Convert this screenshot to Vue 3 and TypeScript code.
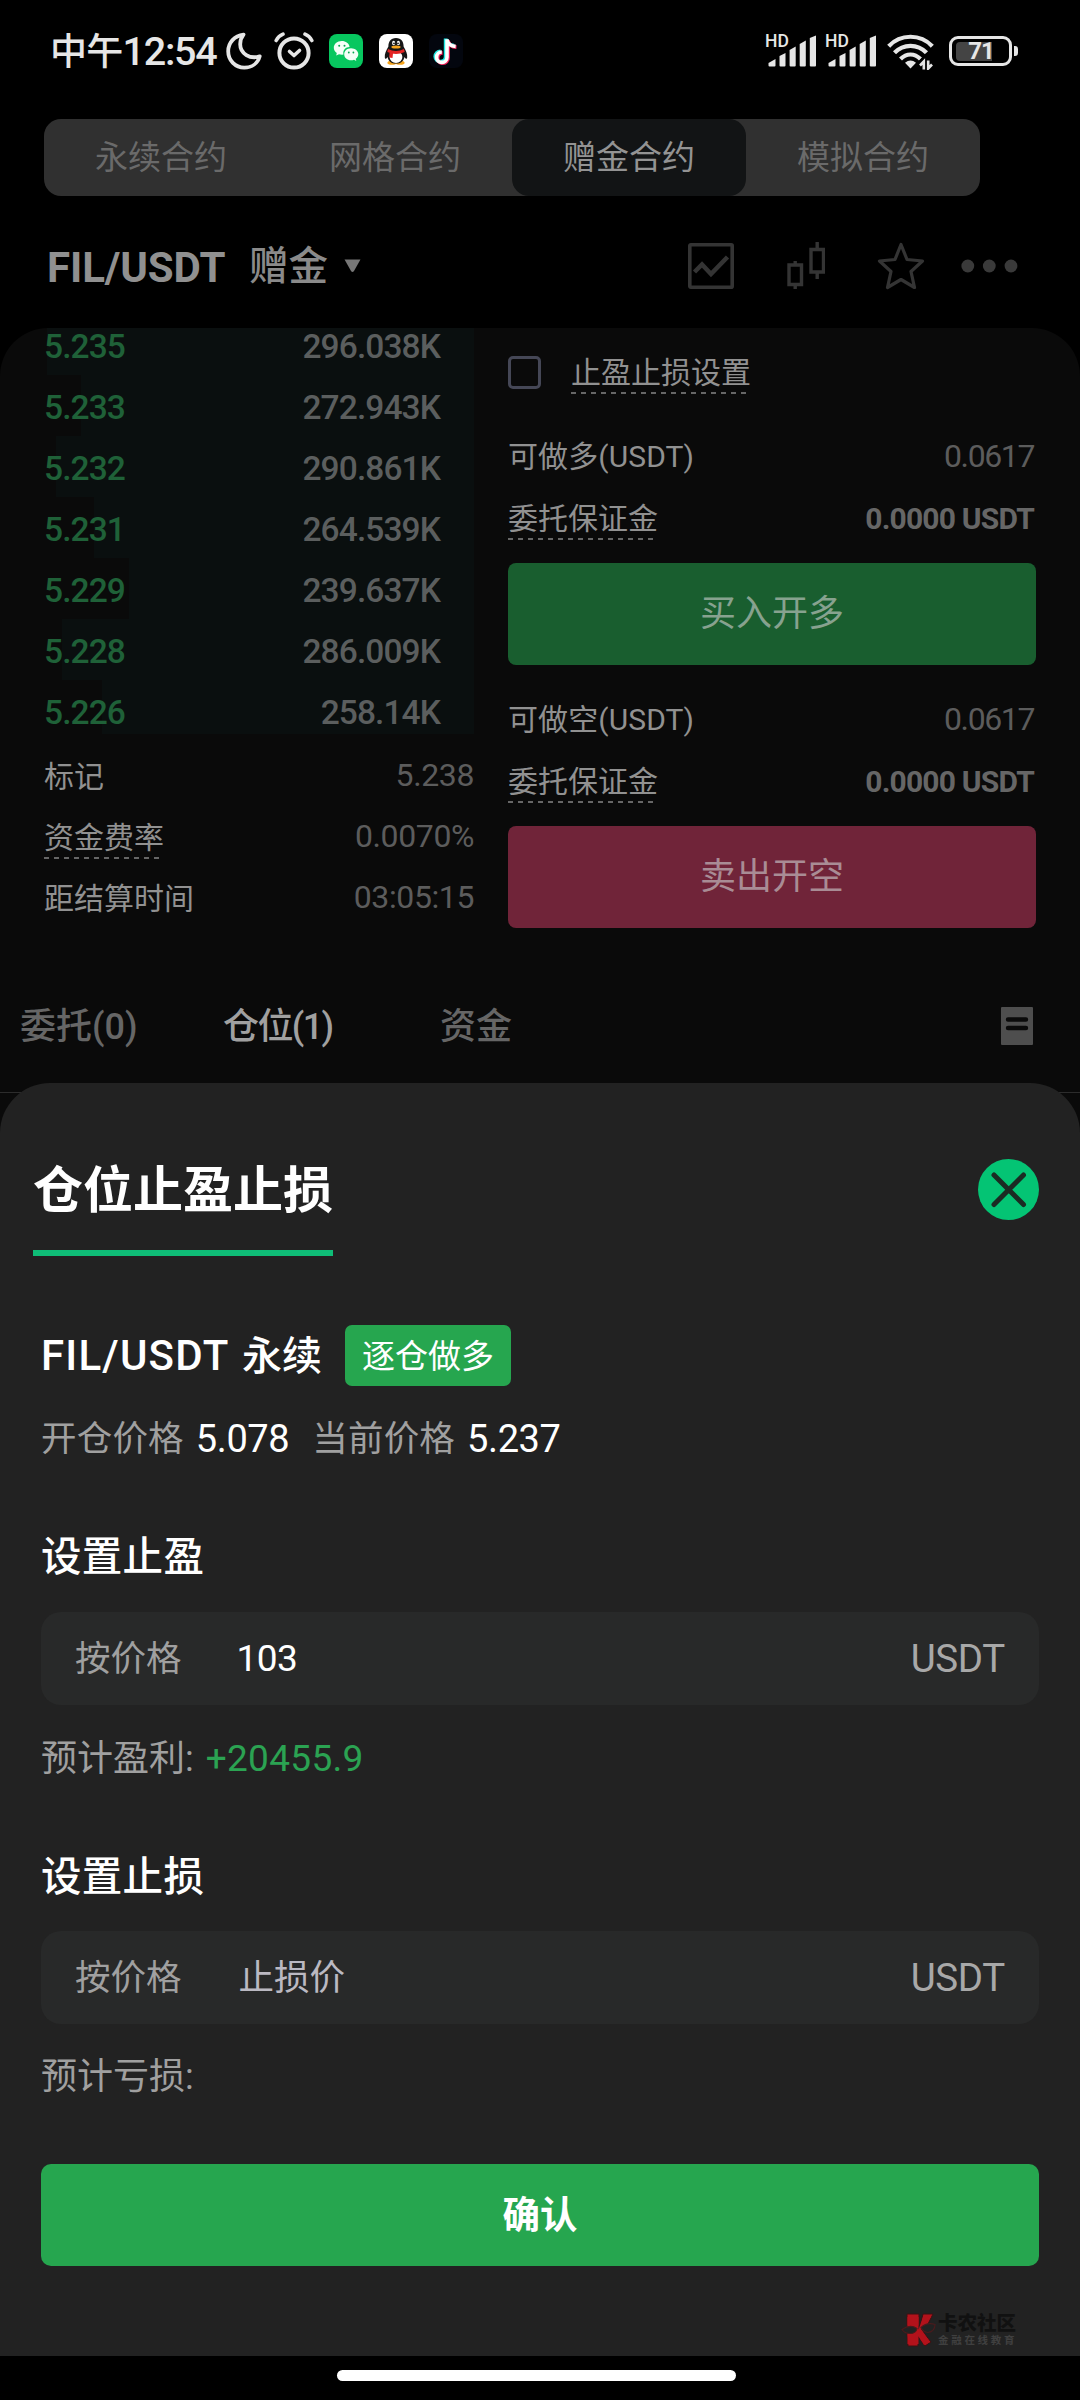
<script setup lang="ts">
interface Level {
  price: string
  amount: string
  bar: number
}

const segments: string[] = ['永续合约', '网格合约', '赠金合约', '模拟合约']
const activeSegment = 2

// bar: width in px of the depth bar, measured from the right edge of the book
const levels: Level[] = [
  { price: '5.235', amount: '296.038K', bar: 427 },
  { price: '5.233', amount: '272.943K', bar: 393 },
  { price: '5.232', amount: '290.861K', bar: 418 },
  { price: '5.231', amount: '264.539K', bar: 380 },
  { price: '5.229', amount: '239.637K', bar: 345 },
  { price: '5.228', amount: '286.009K', bar: 412 },
  { price: '5.226', amount: '258.14K', bar: 372 },
]

const info = [
  { label: '标记', value: '5.238', dashed: false },
  { label: '资金费率', value: '0.0070%', dashed: true },
  { label: '距结算时间', value: '03:05:15', dashed: false },
]

const orders = [
  { label: '可做多(USDT)', button: '买入开多', kind: 'buy' },
  { label: '可做空(USDT)', button: '卖出开空', kind: 'sell' },
]
</script>

<template>
  <div class="screen">
    <header class="status">
      <span class="clock"><span class="noon">中午</span>12:54</span>
      <svg class="moon" width="36" height="38" viewBox="0 0 36 38">
        <path d="M17.5 2.6C8.500 3.800 2.200 10.500 2.200 19.300C2.200 28.500 9.300 35.600 18.300 35.600C25.800 35.600 31.800 31.300 33.700 24.300C24 27.500 14.200 21.700 14.200 12.300C14.200 8.500 15.500 5.100 17.500 2.600Z" fill="none" stroke="#e6e6e6" stroke-width="3.800" stroke-linejoin="round" />
      </svg>
      <svg class="alarm" width="40" height="38" viewBox="0 0 40 38" fill="none" stroke="#e6e6e6" stroke-width="4" stroke-linecap="round" stroke-linejoin="round">
        <circle cx="20" cy="21" r="14.600" />
        <path d="M15.500 19.500L20 23.500L25.500 18.500" stroke-width="3.600" />
        <path d="M2.200 8.500Q4.500 4 9 2.200M31 2.200Q35.500 4 37.800 8.500" stroke-width="3.600" />
      </svg>
      <svg class="wechat" width="34" height="34" viewBox="0 0 34 34">
        <rect width="34" height="34" rx="8" fill="#07c75f" />
        <path d="M12.800 7C8 7 4.800 10 4.800 13.800C4.800 16 6 17.800 7.800 19L7.200 21.600L10 20.200Q12 20.900 14.500 20.600C13.500 15.500 17.500 12.800 20.600 13C20.200 9.500 16.800 7 12.800 7Z" fill="#f4fff8" />
        <path d="M22 14.200C17.800 14.200 15.200 17 15.200 20.200C15.200 23.700 18.200 26.200 22 26.200Q23.600 26.200 25 25.700L27.300 26.900L26.700 24.800C28.300 23.700 29.300 22 29.300 20.200C29.300 17 26.300 14.200 22 14.200Z" fill="#f4fff8" />
        <g fill="#07a851"><circle cx="10.200" cy="11.700" r="1" /><circle cx="15.500" cy="11.700" r="1" /><circle cx="19.800" cy="18.500" r=".9" /><circle cx="24.400" cy="18.500" r=".9" /></g>
      </svg>
      <svg class="qq" width="34" height="34" viewBox="0 0 34 34">
        <rect width="34" height="34" rx="8" fill="#fff" />
        <ellipse cx="13" cy="28.800" rx="4.600" ry="2" fill="#f6a41c" /><ellipse cx="21" cy="28.800" rx="4.600" ry="2" fill="#f6a41c" />
        <path d="M17 4C11.500 4 9.400 8 9.400 12.500C7 17 5.500 19.500 5.800 23.500C6.200 26 7.600 24.500 8.500 23C9.500 27.500 12.500 29.600 17 29.600S24.500 27.500 25.500 23C26.400 24.500 27.800 26 28.200 23.500C28.500 19.500 27 17 24.600 12.500C24.600 8 22.500 4 17 4Z" fill="#161616" />
        <ellipse cx="17" cy="23" rx="6.400" ry="6" fill="#fff" />
        <path d="M9 15Q17 19 25 15L25.700 18Q17 22 8.300 18ZM10.500 18L14 19.500L13.500 24L10.300 23.400Z" fill="#e32424" />
        <ellipse cx="14.600" cy="9" rx="1.500" ry="2.200" fill="#fff" /><ellipse cx="19.400" cy="9" rx="1.500" ry="2.200" fill="#fff" />
        <circle cx="15" cy="9.400" r=".8" /><circle cx="19" cy="9.400" r=".8" />
        <ellipse cx="17" cy="13" rx="4.600" ry="1.500" fill="#f6a41c" />
      </svg>
      <svg class="tiktok" width="34" height="34" viewBox="0 0 34 34" fill="none" stroke-width="3.800">
        <rect width="34" height="34" rx="8" fill="#03060e" />
        <path d="M16.700 4.500V22.500A5.200 5.200 0 1 1 11.500 17.300M16.900 5.500Q18.200 11 25 11.600" stroke="#25e8e4" />
        <path d="M19 6V23.800A5.200 5.200 0 1 1 13.600 18.800M19 7Q20.500 12.700 27.500 13.200" stroke="#f5205a" />
        <path d="M18 5.200V23.200A5.200 5.200 0 1 1 12.800 18M18.100 6.200Q19.600 11.900 26.600 12.400" stroke="#fff" stroke-width="3.600" />
      </svg>
      <div class="status-right">
        <div v-for="n in 2" :key="n" class="signal">
          <span class="hd">HD</span>
          <svg width="49" height="34" viewBox="2 0 49 34">
            <g fill="#e6e6e6">
              <path d="M2.500 29L9.500 25V31.500Q9.500 32.500 8.500 32.500H3.500Q2.500 32.500 2.500 31.500Z" />
              <path d="M13.500 22L19.500 19V31.500Q19.500 32.500 18.500 32.500H14.500Q13.500 32.500 13.500 31.500Z" />
              <path d="M23.600 16L29.700 12.500V31.500Q29.700 32.500 28.700 32.500H24.600Q23.600 32.500 23.600 31.500Z" />
              <path d="M33.700 10L39.800 6.500V31.500Q39.800 32.500 38.800 32.500H34.700Q33.700 32.500 33.700 31.500Z" />
              <path d="M43.800 4L50 1.500V31.500Q50 32.500 49 32.500H44.800Q43.800 32.500 43.800 31.500Z" />
            </g>
          </svg>
        </div>
        <svg class="wifi" width="47" height="36" viewBox="0 0 47 36">
          <g fill="none" stroke="#e6e6e6" stroke-width="4.200">
            <path d="M1.700 12.200C13.500 -.4 33.500 -.4 45.300 12.200" />
            <path d="M7.500 18.800C16.500 9.500 30.500 9.500 39.500 18.800" />
            <path d="M13.500 25C19.500 19 27.500 19 33.500 25" />
          </g>
          <path d="M18 28.700Q23.500 24.500 29 28.700L23.500 34.500Z" fill="#e6e6e6" />
          <path d="M36.500 36V26.500L32.800 30.500M41 26V35.500L45 31.500" fill="none" stroke="#000" stroke-width="6" />
          <path d="M36.800 35.500V27.500L33 31.500M41.200 26.500V34.500L45 30.500" fill="none" stroke="#e6e6e6" stroke-width="2.600" />
        </svg>
        <div class="battery"><div class="charge"></div><span class="pct">71</span></div>
        <div class="nub"></div>
      </div>
    </header>

    <nav class="segments">
      <div v-for="(s, i) in segments" :key="s" class="segment" :class="{ on: i === activeSegment }">{{ s }}</div>
    </nav>

    <div class="pair">
      <span class="symbol">FIL/USDT</span>
      <span class="gift">赠金</span>
      <svg class="caret" width="17" height="14" viewBox="0 0 17 14"><path d="M.5 .5H16.500L10 12Q8.500 14 7 12Z" fill="#777" /></svg>
      <div class="tools">
        <svg width="46" height="46" viewBox="0 0 46 46" fill="none" stroke="#343434" stroke-width="3.600">
          <rect x="1.800" y="1.800" width="42.400" height="42.400" rx="1" />
          <path d="M6.500 29L14 21.500L23 31L39.500 14" stroke-width="4.500" />
        </svg>
        <svg class="candles" width="38" height="48" viewBox="0 0 38 48" fill="none" stroke="#343434" stroke-width="3.400">
          <path d="M2 23H14.500V42.500H2ZM8.200 19V23M8.200 42.500V47M24 7.500H36.500V30H24ZM30.200 0V7.500M30.200 30V37" />
        </svg>
        <svg class="star" width="48" height="48" viewBox="0 0 48 48" fill="none" stroke="#343434" stroke-width="3.200" stroke-linejoin="round">
          <path d="M24 2.500L30 17.500L45.500 19L34 29.500L37.500 45.500L24 37.500L10.500 45.500L14 29.500L2.500 19L18 17.500Z" />
        </svg>
        <svg class="dots" width="57" height="14" viewBox="0 0 57 14" fill="#3a3a3a">
          <circle cx="6.800" cy="7" r="6.400" /><circle cx="28.300" cy="7" r="6.400" /><circle cx="50" cy="7" r="6.400" />
        </svg>
      </div>
    </div>

    <main class="panel">
      <div class="columns">
        <section class="left">
          <div class="book">
            <div v-for="l in levels" :key="l.price" class="level">
              <div class="depth" :style="{ width: l.bar + 'px' }"></div>
              <span class="price">{{ l.price }}</span>
              <span class="amount">{{ l.amount }}</span>
            </div>
          </div>
          <div v-for="row in info" :key="row.label" class="info-row">
            <span class="info-label" :class="{ dashed: row.dashed }">{{ row.label }}</span>
            <span class="info-value">{{ row.value }}</span>
          </div>
        </section>

        <section class="right">
          <div class="tpsl">
            <span class="checkbox"></span>
            <span class="dashed">止盈止损设置</span>
          </div>
          <div v-for="o in orders" :key="o.kind" class="order">
            <div class="avail"><span>{{ o.label }}</span><span class="avail-value">0.0617</span></div>
            <div class="margin"><span class="dashed">委托保证金</span><span class="margin-value">0.0000 USDT</span></div>
            <button class="trade" :class="o.kind">{{ o.button }}</button>
          </div>
        </section>
      </div>

      <div class="tabs">
        <span class="tab first">委托(0)</span>
        <span class="tab second">仓位(1)</span>
        <span class="tab third">资金</span>
        <svg class="list" width="32" height="38" viewBox="0 0 32 38">
          <rect width="32" height="38" rx="1" fill="#4e4e4e" />
          <path d="M7 12.500H25M7 21H25" stroke="#0a0a0a" stroke-width="4.400" stroke-linecap="round" />
        </svg>
      </div>
    </main>

    <section class="sheet">
      <div class="sheet-head">
        <h2>仓位止盈止损</h2>
        <svg class="close" width="61" height="61" viewBox="0 0 61 61">
          <circle cx="30.500" cy="30.500" r="30.500" fill="#04c474" />
          <path d="M16 16L45.500 45.500M45.500 16L16 45.500" stroke="#1b2b23" stroke-width="5" stroke-linecap="round" />
        </svg>
      </div>
      <div class="position">
        <span class="pos-symbol">FIL/USDT</span>
        <span class="pos-name">永续</span>
        <span class="badge">逐仓做多</span>
      </div>
      <div class="prices">
        <span>开仓价格</span><b class="open">5.078</b>
        <span class="now-label">当前价格</span><b>5.237</b>
      </div>

      <h3>设置止盈</h3>
      <div class="field"><span>按价格</span><span class="entry">103</span><span class="unit">USDT</span></div>
      <div class="estimate">预计盈利:<span class="gain">+20455.9</span></div>

      <h3>设置止损</h3>
      <div class="field"><span>按价格</span><span class="entry hint">止损价</span><span class="unit">USDT</span></div>
      <div class="estimate">预计亏损:</div>

      <button class="confirm">确认</button>

      <div class="watermark">
        <svg width="36" height="36" viewBox="0 0 36 36">
          <path d="M6 2H18V14H6ZM6 22L17 17V34H7ZM22 2H32L26 14H19ZM19 16L30 30L24 34L18 26Z" fill="#b3121b" stroke="#3c1012" />
          <path d="M6.500 5H17.500V32H6.500ZM22 5H30L20 17L29 30L23 33L16 22Z" fill="#b3121b" />
          <path d="M1 17.500Q9 12 16 16.500Q15 21.500 9 21.500Q3.500 21.500 1 17.500ZM20 15.500Q26 10 34 12.500Q34 19.500 27 20.500Q22 20 20 15.500Z" fill="#222" stroke="#4a1b1d" stroke-width="1.200" />
        </svg>
        <div class="wm-text"><span class="wm-name">卡农社区</span><span class="wm-sub">金融在线教育</span></div>
      </div>
    </section>

    <footer class="home"><div class="home-bar"></div></footer>
  </div>
</template>

<style>
body {
  margin: 0;
  background: #000;
}
</style>

<style scoped>
.screen {
  position: relative;
  display: flex;
  flex-direction: column;
  width: 1080px;
  height: 2400px;
  overflow: hidden;
  background: #000;
  color: #919191;
  font-family: Roboto, "Noto Sans CJK SC", sans-serif;
  line-height: 1.3;
  white-space: nowrap;
}
button {
  display: block;
  padding: 0;
  border: 0;
  font-family: inherit;
  text-align: center;
}
svg {
  display: block;
  flex: none;
}

/* status bar */
.status {
  display: flex;
  align-items: center;
  box-sizing: border-box;
  height: 119px;
  padding: 0 62px 17px 50px;
  color: #e6e6e6;
}
.clock {
  width: 176px;
  padding-top: 1px;
  font-size: 39.5px;
  font-weight: 500;
  letter-spacing: -1.2px;
}
.noon {
  font-size: 37px;
  letter-spacing: -0.8px;
}
.alarm { margin-left: 12px; }
.wechat { margin-left: 15px; }
.qq, .tiktok { margin-left: 16px; }
.status-right {
  display: flex;
  align-items: center;
  margin-left: auto;
}
.signal {
  display: grid;
  justify-items: end;
  align-items: start;
  width: 51px;
  margin-right: 9px;
}
.signal > * { grid-area: 1 / 1; }
.hd {
  justify-self: start;
  margin: -3px 0 0 -1px;
  font-size: 17.5px;
  font-weight: 500;
  line-height: 20px;
}
.wifi { margin: 2px 15px 0 1px; }
.battery {
  display: grid;
  align-items: center;
  box-sizing: border-box;
  width: 63px;
  height: 30px;
  border: 3px solid #e6e6e6;
  border-radius: 9px;
}
.charge, .pct { grid-area: 1 / 1; }
.charge {
  width: 36px;
  height: 19px;
  margin-left: 4px;
  border-radius: 4px 0 0 4px;
  background: #444;
}
.pct {
  padding-left: 1px;
  font-size: 24px;
  font-weight: 700;
  line-height: 24px;
  letter-spacing: -1px;
  text-align: center;
}
.nub {
  width: 4px;
  height: 10px;
  margin: 0 0 0 2px;
  border-radius: 0 3px 3px 0;
  background: #e6e6e6;
}

/* contract type switch */
.segments {
  display: flex;
  width: 936px;
  height: 77px;
  margin-left: 44px;
  border-radius: 17px;
  background: #303030;
}
.segment {
  flex: 1;
  border-radius: 17px;
  color: #6a6a6a;
  font-size: 33px;
  line-height: 78px;
  text-align: center;
}
.segment.on {
  background: #121415;
  color: #939393;
}

/* trading pair */
.pair {
  display: flex;
  align-items: center;
  box-sizing: border-box;
  height: 132px;
  padding: 8px 62px 0 47px;
}
.symbol {
  width: 202px;
  padding-top: 4px;
  font-size: 42px;
  font-weight: 700;
  letter-spacing: -0.1px;
  color: #909090;
}
.gift {
  width: 95px;
  padding-top: 1px;
  font-size: 39.5px;
  font-weight: 500;
  color: #8a8a8a;
}
.tools {
  display: flex;
  align-items: center;
  margin-left: auto;
}
.candles { margin-left: 53px; }
.star { margin-left: 52px; }
.dots { margin-left: 36px; }

/* order book and order form */
.panel {
  flex: none;
  height: 1010px;
  border-radius: 48px 48px 0 0;
  background: #0a0a0a;
}
.columns {
  display: flex;
  height: 600px;
}
.left { width: 474px; }
.level {
  display: grid;
  grid-template: 100% / 1fr auto;
  height: 61px;
  padding: 0 0 0 44px;
  line-height: 65px;
  font-size: 33.500px;
  font-weight: 500;
  letter-spacing: -0.900px;
}
.level:first-child {
  height: 47px;
  line-height: 38px;
}
.level:last-child { height: 54px; }
.depth {
  grid-area: 1 / 1 / 2 / 3;
  justify-self: end;
  background: #0a0f0f;
}
.price {
  grid-area: 1 / 1;
  color: #1f6138;
}
.amount {
  grid-area: 1 / 2;
  padding-right: 34px;
  color: #5b5e5e;
}
.info-row {
  display: flex;
  align-items: center;
  justify-content: space-between;
  height: 61px;
  padding-left: 44px;
}
.book + .info-row { margin-top: 11px; }
.info-label {
  padding-top: 1px;
  font-size: 30px;
}
.info-value {
  color: #5c5c5c;
  font-size: 32px;
  letter-spacing: -0.400px;
}
.dashed {
  height: 44px;
  padding-top: 0;
  line-height: 45px;
  background: repeating-linear-gradient(90deg, #666 0 5px, transparent 5px 10px) bottom left / 98% 2px no-repeat;
}
.right {
  width: 528px;
  margin-left: 34px;
  font-size: 30px;
}
.tpsl {
  display: flex;
  align-items: center;
  height: 88px;
}
.checkbox {
  box-sizing: border-box;
  width: 33px;
  height: 33px;
  margin-right: 30px;
  border: 3px solid #454756;
  border-radius: 5px;
}
.avail, .margin {
  display: flex;
  align-items: center;
  justify-content: space-between;
  padding-right: 2px;
}
.avail { height: 80px; letter-spacing: 0.1px; }
.margin { height: 44px; }
.margin .dashed { line-height: 46px; }
.avail-value {
  padding-top: 1px;
  color: #5c5c5c;
  font-size: 32px;
  letter-spacing: -1.400px;
}
.margin-value {
  padding-top: 1px;
  color: #666;
  font-size: 30px;
  font-weight: 700;
  letter-spacing: -0.8px;
}
.trade {
  width: 528px;
  height: 102px;
  margin: 23px 0 14px;
  border-radius: 8px;
  font-size: 36px;
  line-height: 103px;
}
.trade.buy { background: #195e2f; color: #87a28f; }
.trade.sell { background: #702439; color: #a98c95; }

.tabs {
  display: flex;
  align-items: center;
  height: 132px;
  margin-top: 32px;
  padding: 0 47px 0 20px;
  border-bottom: 1px solid #2c2c2c;
  font-size: 36px;
  font-weight: 500;
  color: #666;
}
.tab { padding-top: 2px; }
.first { width: 203px; }
.second { width: 217px; color: #a0a0a0; letter-spacing: -1.600px; }
.list { margin-left: auto; }

/* bottom sheet over the trading page */
.sheet {
  position: absolute;
  top: 1083px;
  left: 0;
  box-sizing: border-box;
  width: 1080px;
  height: 1273px;
  padding: 0 41px;
  border-radius: 50px 50px 0 0;
  background: #222;
  color: #a0a0a0;
  font-size: 35.500px;
}
.sheet-head {
  display: flex;
  justify-content: space-between;
  height: 242px;
}
h2 {
  box-sizing: border-box;
  width: 300px;
  height: 173px;
  margin: 0 0 0 -8px;
  padding-top: 43px;
  border-bottom: 6px solid #0fbd77;
  color: #fff;
  font-size: 50px;
  font-weight: 700;
  line-height: 131px;
}
.close { margin-top: 76px; }
.position {
  display: flex;
  align-items: center;
  height: 61px;
  color: #fff;
}
.pos-symbol {
  width: 201px;
  padding-top: 2px;
  font-size: 42px;
  font-weight: 500;
  letter-spacing: 1.200px;
}
.pos-name {
  width: 103px;
  padding-top: 2px;
  font-size: 40px;
  font-weight: 500;
}
.badge {
  width: 166px;
  height: 61px;
  border-radius: 7px;
  background: #26a64f;
  font-size: 33px;
  line-height: 63px;
  text-align: center;
}
.prices {
  display: flex;
  align-items: center;
  box-sizing: border-box;
  height: 104px;
  padding-top: 2px;
  letter-spacing: 0.2px;
}
.prices b {
  margin-left: 12px;
  padding-top: 1px;
  color: #fff;
  font-size: 38px;
  font-weight: 400;
  letter-spacing: -0.4px;
}
.now-label { margin-left: 23px; }
h3 {
  height: 121px;
  margin: 0;
  color: #fff;
  font-size: 40.500px;
  font-weight: 500;
  line-height: 134px;
  letter-spacing: 0.3px;
}
.prices + h3 { height: 122px; line-height: 135px; }
.field {
  display: flex;
  align-items: center;
  box-sizing: border-box;
  width: 998px;
  height: 93px;
  padding: 2px 34px 0;
  border-radius: 20px;
  background: #282929;
}
.entry {
  margin-left: 55px;
  color: #fff;
  font-size: 37px;
  letter-spacing: -0.5px;
}
.entry.hint {
  margin-left: 57px;
  color: #bbb9c2;
  font-size: 35.500px;
  letter-spacing: 0;
}
.unit {
  margin-left: auto;
  font-size: 38.500px;
  letter-spacing: -0.3px;
  color: #a8a8a8;
}
.estimate {
  height: 105px;
  font-size: 36px;
  line-height: 107px;
}
.gain {
  margin-left: 12px;
  color: #2ba352;
  font-size: 37px;
  letter-spacing: 0.300px;
}
.confirm {
  width: 998px;
  height: 102px;
  margin-top: 35px;
  border-radius: 10px;
  background: #26a64f;
  color: #fff;
  font-size: 37.500px;
  font-weight: 700;
  line-height: 102px;
}
.watermark {
  display: flex;
  align-items: center;
  justify-content: flex-end;
  height: 36px;
  margin: 46px 19px 0 0;
}
.wm-text {
  display: flex;
  flex-direction: column;
  width: 82px;
  margin-left: 1px;
}
.wm-name {
  color: #111;
  font-size: 19.500px;
  font-weight: 900;
  line-height: 21px;
}
.wm-sub {
  color: #404040;
  font-size: 10.500px;
  font-weight: 700;
  line-height: 13px;
  letter-spacing: 2.700px;
}

.home {
  position: absolute;
  left: 0;
  bottom: 0;
  box-sizing: border-box;
  width: 1080px;
  height: 44px;
  padding-top: 14px;
  background: #000;
}
.home-bar {
  width: 399px;
  height: 11px;
  margin-left: 337px;
  border-radius: 6px;
  background: #fff;
}
</style>
